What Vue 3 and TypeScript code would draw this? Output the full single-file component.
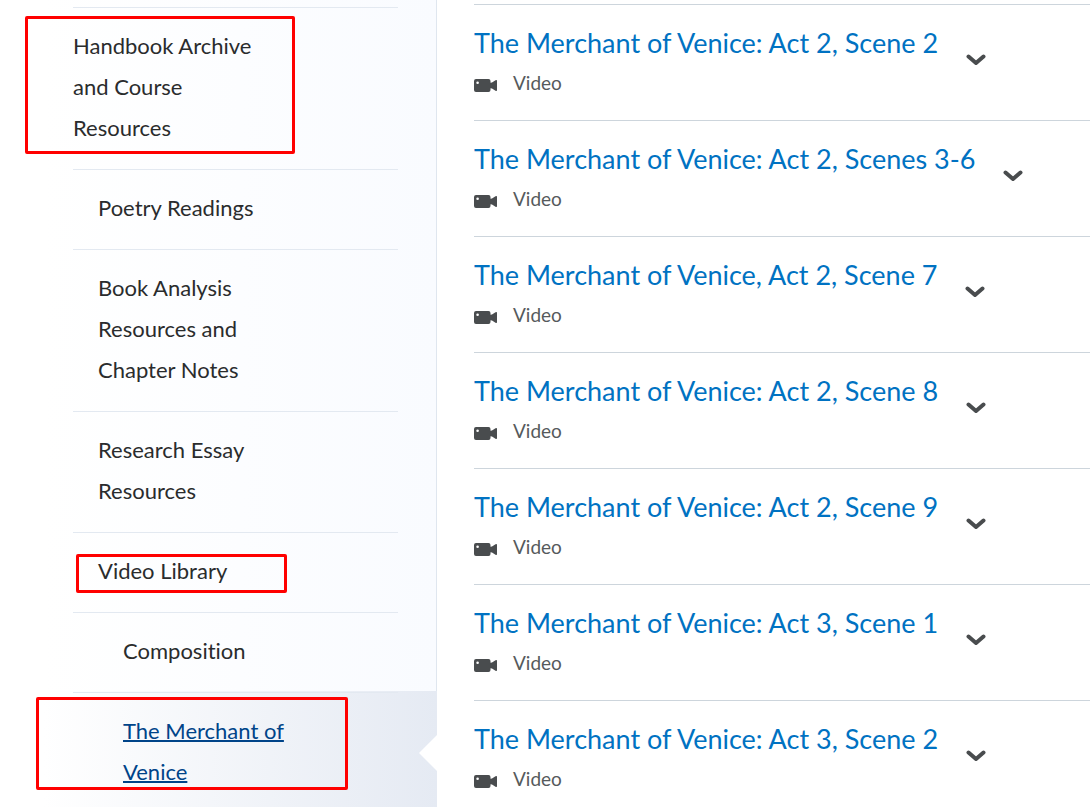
<script setup lang="ts">
interface NavItem {
  label: string
  level: number
  active?: boolean
  mark?: string
}

const navItems: NavItem[] = [
  { label: 'Handbook Archive and Course Resources', level: 0, mark: 'mark-handbook' },
  { label: 'Poetry Readings', level: 1 },
  { label: 'Book Analysis Resources and Chapter Notes', level: 1 },
  { label: 'Research Essay Resources', level: 1 },
  { label: 'Video Library', level: 1, mark: 'mark-library' },
  { label: 'Composition', level: 2 },
  { label: 'The Merchant of Venice', level: 2, active: true, mark: 'mark-merchant' },
]

const topics: string[] = [
  'The Merchant of Venice: Act 2, Scene 2',
  'The Merchant of Venice: Act 2, Scenes 3-6',
  'The Merchant of Venice, Act 2, Scene 7',
  'The Merchant of Venice: Act 2, Scene 8',
  'The Merchant of Venice: Act 2, Scene 9',
  'The Merchant of Venice: Act 3, Scene 1',
  'The Merchant of Venice: Act 3, Scene 2',
]
</script>

<template>
  <div class="page">
    <nav class="sidebar" aria-label="Table of contents">
      <ul class="nav-list">
        <li v-for="item in navItems" :key="item.label" class="nav-item" :class="{ active: item.active }">
          <div class="nav-row" :class="'level-' + item.level">
            <a href="#" class="nav-link" :aria-current="item.active ? 'page' : undefined">{{ item.label }}</a>
            <span v-if="item.mark" class="mark" :class="item.mark" aria-hidden="true"></span>
          </div>
        </li>
      </ul>
    </nav>
    <main class="content">
      <ul class="topics">
        <li v-for="topic in topics" :key="topic" class="topic">
          <div class="info">
            <a href="#" class="title">{{ topic }}</a>
            <div class="meta">
              <svg class="camera" width="23" height="18" viewBox="0 0 23 18" aria-hidden="true">
                <path
                  fill="#494c4e"
                  fill-rule="evenodd"
                  d="M2 5h12.500a2 2 0 0 1 2 2v1.700l1.500-.2 3.500-2.200q1.500-.8 1.500.6v9.200q0 1.400-1.500.6l-3.500-2.200-1.500-.2V16a2 2 0 0 1-2 2H2a2 2 0 0 1-2-2V7a2 2 0 0 1 2-2zM3.600 7.500a1.300 1.300 0 1 0 0 2.600a1.300 1.300 0 0 0 0-2.600z"
                />
              </svg>
              <span>Video</span>
            </div>
          </div>
          <button type="button" class="toggle" :aria-label="'Actions for ' + topic">
            <svg width="20" height="12" viewBox="0 0 20 12" aria-hidden="true">
              <path
                d="M2.500 2.500L10 9l7.500-6.500"
                fill="none"
                stroke="#494c4e"
                stroke-width="4"
                stroke-linecap="round"
                stroke-linejoin="round"
              />
            </svg>
          </button>
        </li>
      </ul>
    </main>
  </div>
</template>

<style>
body {
  margin: 0;
  background: #fff;
}
</style>

<style scoped>
.page {
  display: grid;
  grid-template-columns: 437px minmax(0, 1fr);
  height: 100vh;
  overflow: hidden;
  background: #fff;
  font-family: Lato, "Open Sans", sans-serif;
  font-variant-ligatures: none;
}

ul {
  list-style: none;
  margin: 0;
  padding: 0;
}

.sidebar {
  box-sizing: border-box;
  padding-top: 7px;
  border-right: 1px solid #dfe6ef;
  background: linear-gradient(to right, #fff 10%, #f9fbff);
}

.nav-item {
  position: relative;
  padding: 0 38px 0 73px;
}

.nav-row {
  position: relative;
  padding: 17px 0 21px;
  border-top: 1px solid #e3e9f1;
}

.level-1 {
  padding-left: 25px;
}

.level-2 {
  padding-left: 50px;
}

.nav-link {
  display: block;
  max-width: 192px;
  font-size: 22px;
  line-height: 41px;
  color: #2a2c2d;
  text-decoration: none;
}

.active {
  margin: -1px -1px 0 0;
  padding-top: 1px;
  padding-right: 39px;
  background: linear-gradient(to right, #fff 10%, #e5eaf3);
}

.active::after {
  content: "";
  position: absolute;
  right: 0;
  top: 50%;
  width: 18px;
  height: 36px;
  margin-top: -17px;
  background: #fff;
  clip-path: polygon(100% 0, 0 50%, 100% 100%);
}

.active .nav-link {
  color: #004489;
  text-decoration: underline;
  text-decoration-thickness: 2px;
}

.mark {
  position: absolute;
  box-sizing: border-box;
  border: 3px solid #f00;
  border-radius: 2px;
  pointer-events: none;
}

.mark-handbook {
  left: -48px;
  top: 8px;
  width: 270px;
  height: 138px;
}

.mark-library {
  left: 3px;
  top: 21px;
  width: 211px;
  height: 39px;
}

.mark-merchant {
  left: -37px;
  top: 4px;
  width: 312px;
  height: 93px;
}

.content {
  padding: 4px 0 0 37px;
}

.topic {
  display: flex;
  align-items: flex-start;
  gap: 18px;
  padding: 18px 0 17px;
  border-top: 1px solid #cdd5dc;
}

.title {
  display: block;
  font-size: 27px;
  line-height: 40px;
  color: #0072c2;
  text-decoration: none;
}

.meta {
  display: flex;
  align-items: center;
  gap: 16px;
  font-size: 19px;
  line-height: 40px;
  color: #565a5c;
}

.toggle {
  display: flex;
  align-items: center;
  justify-content: center;
  width: 40px;
  height: 73px;
  padding: 0;
  border: 0;
  background: transparent;
}
</style>
